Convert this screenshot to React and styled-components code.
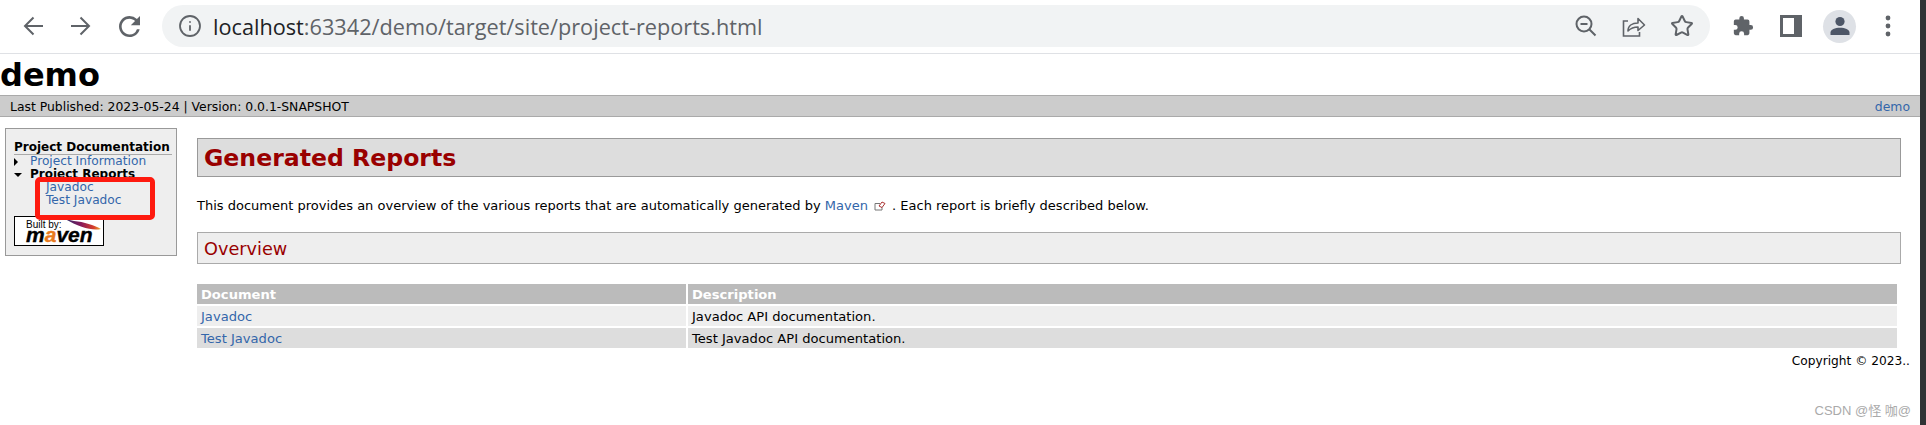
import { Fragment } from "react";
import styled, { createGlobalStyle } from "styled-components";
import { Info, Star } from "lucide-react";

const GlobalStyle = createGlobalStyle`
  html, body {
    margin: 0;
    padding: 0;
    background: #fff;
  }
`;

const Window = styled.div`
  width: 1926px;
  height: 425px;
  display: flex;
  overflow: hidden;
  position: relative;
  font-family: "DejaVu Sans", Verdana, sans-serif;
`;

const Page = styled.div`
  flex: 1;
  min-width: 0;
  display: flex;
  flex-direction: column;
`;

const Strip = styled.div`
  width: 6px;
  background: #303335;
`;

const Toolbar = styled.div`
  flex: none;
  box-sizing: border-box;
  border-bottom: 1px solid #dfe1e5;
  height: 54px;
  display: flex;
  align-items: flex-start;
  padding: 5px 0 0 23px;
  color: #5f6368;
`;

const NavButton = styled.div`
  width: ${(p) => p.$w}px;
  height: 42px;
  flex: none;
  display: flex;
  align-items: center;
`;

const Omnibox = styled.div`
  width: 1548px;
  height: 42px;
  flex: none;
  box-sizing: border-box;
  background: #f1f3f4;
  border-radius: 21px;
  display: flex;
  align-items: center;
  padding: 0 16px 0 16px;
`;

const Url = styled.div`
  margin-left: 11px;
  flex: 1;
  font: 21.7px "Open Sans", sans-serif;
  color: #5f6368;
  white-space: nowrap;
  b {
    font-weight: 400;
    color: #202124;
  }
`;

const OmniIcons = styled.div`
  display: flex;
  gap: 24px;
  align-items: center;
`;

const ToolIcon = styled.div`
  width: 24px;
  height: 24px;
  display: flex;
  align-items: center;
  justify-content: center;
`;

const BrowserIcons = styled.div`
  display: flex;
  align-items: center;
  height: 42px;
  gap: 24px;
  margin-left: 21px;
`;

const Avatar = styled.div`
  width: 33px;
  height: 33px;
  border-radius: 50%;
  background: #dee1e6;
  display: flex;
  align-items: center;
  justify-content: center;
  margin: 0 -4px;
`;

const SiteTitle = styled.h1`
  margin: 0;
  height: 41px;
  flex: none;
  font-size: 32px;
  line-height: 43px;
  font-weight: 700;
  color: #000;
`;

const Breadcrumbs = styled.div`
  height: 22px;
  flex: none;
  box-sizing: border-box;
  background: #ccc;
  border-top: 1px solid #aaa;
  border-bottom: 1px solid #aaa;
  display: flex;
  justify-content: space-between;
  align-items: center;
  padding: 0 10px;
  font-size: 12.4px;
  color: #000;
`;

const Link = styled.a`
  color: #36a;
  text-decoration: none;
`;

const Body = styled.div`
  display: flex;
  align-items: flex-start;
  padding: 11px 10px 0 5px;
`;

const Sidebar = styled.div`
  width: 172px;
  height: 128px;
  flex: none;
  box-sizing: border-box;
  background: #eee;
  border: 1px solid #999;
  padding: 12px 4px 0 8px;
  font-size: 12.2px;
  line-height: 13px;
  position: relative;
`;

const NavTitle = styled.div`
  font-weight: 700;
  font-size: 12px;
  color: #000;
  border-bottom: 1px solid #aaa;
  white-space: nowrap;
`;

const NavItem = styled.div`
  display: flex;
  align-items: center;
  gap: 8px;
  white-space: nowrap;
  font-weight: ${(p) => (p.$active ? 700 : 400)};
  font-size: ${(p) => (p.$active ? "12px" : "12.2px")};
  color: #000;
`;

const Caret = styled.span`
  width: 0;
  height: 0;
  flex: none;
  ${(p) =>
    p.$open
      ? `border-left: 4px solid transparent; border-right: 4px solid transparent; border-top: 4px solid #000;`
      : `border-top: 4px solid transparent; border-bottom: 4px solid transparent; border-left: 4px solid #000; margin-right: 4px;`}
`;

const SubNav = styled.div`
  padding-left: 32px;
  display: flex;
  flex-direction: column;
`;

const Highlight = styled.div`
  position: absolute;
  left: 29px;
  top: 48px;
  width: 120px;
  height: 43px;
  box-sizing: border-box;
  border: 5px solid #fe1a0f;
  border-radius: 5px;
`;

const Badge = styled.div`
  width: 90px;
  height: 30px;
  box-sizing: border-box;
  margin-top: 9px;
  background: #fff;
  border: 1px solid #000;
  position: relative;
  overflow: hidden;
  color: #000;
`;

const BuiltBy = styled.span`
  position: absolute;
  left: 11px;
  top: 3px;
  font: 10px/10px "Liberation Sans", sans-serif;
`;

const MavenWord = styled.span`
  position: absolute;
  left: 11px;
  top: 13px;
  font: italic 700 21px/10px "Liberation Sans", sans-serif;
  -webkit-text-stroke: 0.4px #000;
  i {
    color: #e87a1d;
    -webkit-text-stroke: 0.4px #e87a1d;
  }
`;

const Feather = styled.svg`
  position: absolute;
  left: 49px;
  top: 2px;
`;

const Main = styled.div`
  flex: 1;
  min-width: 0;
  margin: 10px 0 0 20px;
`;

const PageHeading = styled.h2`
  margin: 0 9px 0 0;
  height: 39px;
  box-sizing: border-box;
  background: #ddd;
  border: 1px solid #999;
  padding: 0 6px;
  font-size: 23.6px;
  line-height: 39px;
  font-weight: 700;
  color: #900;
`;

const Intro = styled.p`
  margin: 22px 0 19px;
  font-size: 13px;
  line-height: 14px;
  color: #000;
  white-space: nowrap;
`;

const ExternalIcon = styled.svg`
  margin: 0 2px 0 6px;
  vertical-align: -1px;
`;

const SectionHeading = styled.h3`
  margin: 0 9px 0 0;
  height: 32px;
  box-sizing: border-box;
  background: #eee;
  border: 1px solid #aaa;
  padding: 2px 6px 0;
  font-size: 17.7px;
  line-height: 28px;
  font-weight: 400;
  color: #900;
`;

const ReportGrid = styled.div`
  width: 1700px;
  margin-top: 20px;
  display: grid;
  grid-template-columns: 489px 1fr;
  gap: 2px;
  font-size: 13.1px;
  line-height: 19px;
`;

const Cell = styled.div`
  height: 20px;
  box-sizing: border-box;
  padding: 1px 0 0 4px;
  background: ${(p) => p.$bg};
  color: ${(p) => (p.$head ? "#fff" : "#000")};
  font-weight: ${(p) => (p.$head ? 700 : 400)};
`;

const Copyright = styled.div`
  margin-top: 5px;
  font-size: 12.2px;
  line-height: 16px;
  text-align: right;
  color: #000;
`;

const Watermark = styled.div`
  position: absolute;
  right: 15px;
  top: 400px;
  font: 13px "Liberation Sans", "Noto Sans CJK SC", sans-serif;
  color: #aaa;
`;

const rows = [
  { name: "Javadoc", desc: "Javadoc API documentation.", bg: "#eee" },
  { name: "Test Javadoc", desc: "Test Javadoc API documentation.", bg: "#ddd" },
];

export default function App() {
  return (
    <Window>
      <GlobalStyle />
      <Page>
        <Toolbar>
          <NavButton $w={48}>
            <svg width="20" height="20" viewBox="0 0 20 20" fill="none" stroke="#5f6368" strokeWidth="2">
              <path d="M20 10H2M10.500 1.500L2 10l8.500 8.500" />
            </svg>
          </NavButton>
          <NavButton $w={48}>
            <svg width="20" height="20" viewBox="0 0 20 20" fill="none" stroke="#5f6368" strokeWidth="2">
              <path d="M0 10h18M9.500 1.500L18 10l-8.500 8.500" />
            </svg>
          </NavButton>
          <NavButton $w={43}>
            <svg width="21" height="21" viewBox="4 4 16 16" fill="#5f6368">
              <path d="M17.650 6.350A7.958 7.958 0 0 0 12 4c-4.420 0-7.990 3.580-7.990 8s3.570 8 7.990 8c3.730 0 6.840-2.550 7.730-6h-2.080A5.990 5.990 0 0 1 12 18c-3.310 0-6-2.690-6-6s2.690-6 6-6c1.660 0 3.140.690 4.220 1.780L13 11h7V4l-2.350 2.350z" />
            </svg>
          </NavButton>
          <Omnibox>
            <Info size={24} strokeWidth={1.8} color="#5f6368" />
            <Url>
              <b>localhost</b>:63342/demo/target/site/project-reports.html
            </Url>
            <OmniIcons>
              <ToolIcon>
                <svg width="22" height="22" viewBox="0 0 22 22" fill="none" stroke="#5f6368" strokeWidth="2">
                  <circle cx="9" cy="9" r="7.500" />
                  <path d="M5.500 9h7M14.500 14.500l6 6" />
                </svg>
              </ToolIcon>
              <ToolIcon>
                <svg width="24" height="22" viewBox="0 0 24 22" fill="none" stroke="#5f6368" strokeWidth="1.6">
                  <path d="M6 6H1.500v15h16v-4" />
                  <path d="M6 16c0-5 4-8 10-8V3.500L22.500 10 16 15.500V12c-4 0-7 1-10 4z" strokeLinejoin="round" />
                </svg>
              </ToolIcon>
              <ToolIcon>
                <Star size={24} strokeWidth={2} color="#5f6368" />
              </ToolIcon>
            </OmniIcons>
          </Omnibox>
          <BrowserIcons>
            <ToolIcon>
              <svg width="22" height="22" viewBox="0 0 24 24" fill="#5f6368">
                <path d="M20.500 11H19V7a2 2 0 0 0-2-2h-4V3.500a2.500 2.500 0 0 0-5 0V5H4a2 2 0 0 0-2 2v3.800h1.500a2.700 2.700 0 0 1 0 5.400H2V20a2 2 0 0 0 2 2h3.800v-1.500a2.700 2.700 0 0 1 5.400 0V22H17a2 2 0 0 0 2-2v-4h1.500a2.500 2.500 0 0 0 0-5z" />
              </svg>
            </ToolIcon>
            <ToolIcon>
              <svg width="22" height="22" viewBox="0 0 22 22">
                <path fill="#5f6368" fillRule="evenodd" d="M0 0h22v22H0zM3 3v16h11V3z" />
              </svg>
            </ToolIcon>
            <Avatar>
              <svg width="20" height="20" viewBox="0 0 20 20" fill="#4d5667">
                <circle cx="10" cy="5.500" r="4.600" />
                <path d="M0.500 19v-2.500C0.500 13.500 5 11.800 10 11.800s9.500 1.700 9.500 4.700V19z" />
              </svg>
            </Avatar>
            <ToolIcon>
              <svg width="6" height="22" viewBox="0 0 6 22" fill="#5f6368">
                <circle cx="3" cy="3" r="2.400" />
                <circle cx="3" cy="11" r="2.400" />
                <circle cx="3" cy="19" r="2.400" />
              </svg>
            </ToolIcon>
          </BrowserIcons>
        </Toolbar>
        <SiteTitle>demo</SiteTitle>
        <Breadcrumbs>
          <span>Last Published: 2023-05-24 | Version: 0.0.1-SNAPSHOT</span>
          <Link>demo</Link>
        </Breadcrumbs>
        <Body>
          <Sidebar>
            <NavTitle>Project Documentation</NavTitle>
            <NavItem>
              <Caret />
              <Link>Project Information</Link>
            </NavItem>
            <NavItem $active>
              <Caret $open />
              <span>Project Reports</span>
            </NavItem>
            <SubNav>
              <Link>Javadoc</Link>
              <Link>Test Javadoc</Link>
            </SubNav>
            <Badge>
              <BuiltBy>Built by:</BuiltBy>
              <Feather width="38" height="12" viewBox="0 0 38 12">
                <defs>
                  <linearGradient id="feather" x1="0" x2="1" y1="0" y2="0">
                    <stop offset="0" stopColor="#2a2a6a" />
                    <stop offset="0.45" stopColor="#8a1a5a" />
                    <stop offset="0.8" stopColor="#d8402a" />
                    <stop offset="1" stopColor="#e8b030" />
                  </linearGradient>
                </defs>
                <path d="M1 0c3 1 6 1 9 2 10 1 20 4 27 8-9 2-22-2-36-10z" fill="url(#feather)" />
              </Feather>
              <MavenWord>
                m<i>a</i>ven
              </MavenWord>
            </Badge>
            <Highlight />
          </Sidebar>
          <Main>
            <PageHeading>Generated Reports</PageHeading>
            <Intro>
              This document provides an overview of the various reports that are automatically generated by{" "}
              <Link>Maven</Link>
              <ExternalIcon width="12" height="11" viewBox="0 0 12 11" fill="none">
                <path d="M1 3.500h5M1 3.500v6.500h7V7" stroke="#777" />
                <path d="M5 6l3-4 3 1.500-3 4z" stroke="#a33" fill="#fff" />
              </ExternalIcon>{" "}
              . Each report is briefly described below.
            </Intro>
            <SectionHeading>Overview</SectionHeading>
            <ReportGrid>
              <Cell $head $bg="#bbb">Document</Cell>
              <Cell $head $bg="#bbb">Description</Cell>
              {rows.map((r) => (
                <Fragment key={r.name}>
                  <Cell $bg={r.bg}>
                    <Link>{r.name}</Link>
                  </Cell>
                  <Cell $bg={r.bg}>{r.desc}</Cell>
                </Fragment>
              ))}
            </ReportGrid>
            <Copyright>Copyright © 2023..</Copyright>
          </Main>
        </Body>
      </Page>
      <Strip />
      <Watermark>CSDN @怪 咖@</Watermark>
    </Window>
  );
}
